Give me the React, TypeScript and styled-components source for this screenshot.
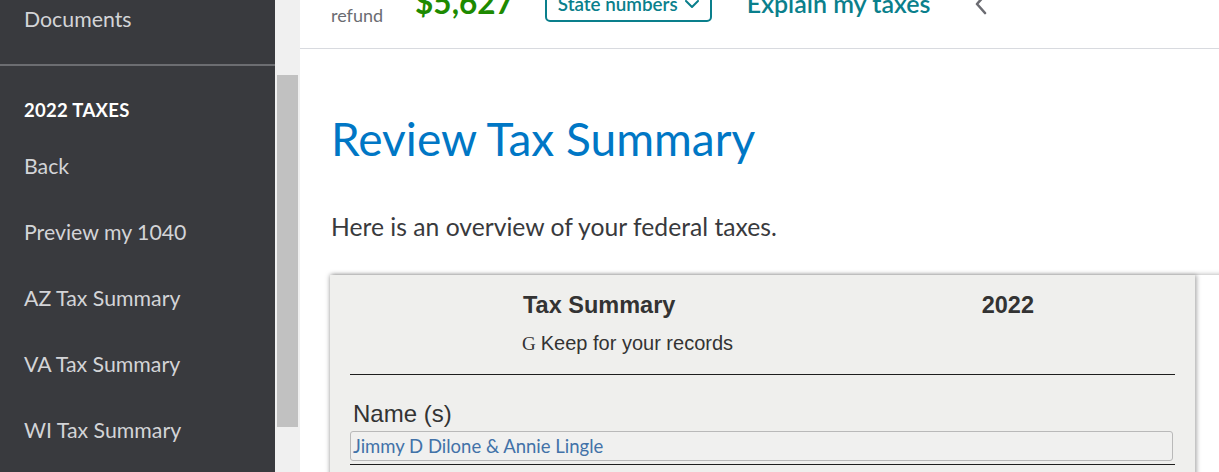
import React, { useLayoutEffect, useRef } from 'react';
import styled, { createGlobalStyle } from 'styled-components';

const Global = createGlobalStyle`
  html, body { margin: 0; padding: 0; height: 100%; overflow: hidden; background: #fff; }
  body { font-family: Lato, "Noto Sans", sans-serif; }
  #root { height: 100%; }
  * { box-sizing: border-box; }
`;

const Shell = styled.div`
  display: flex;
  width: 1219px;
  height: 472px;
  overflow: hidden;
`;

const Sidebar = styled.aside`
  flex: 0 0 300px;
  display: flex;
  height: 100%;
`;

const NavScroll = styled.nav`
  flex: 0 0 275px;
  height: 100%;
  overflow: hidden;
  background: #393a3e;
`;

const ScrollTrack = styled.div`
  flex: 0 0 25px;
  height: 100%;
  padding: 75px 2px 0;
  background: #f0f0f0;
`;

const ScrollThumb = styled.div`
  height: 352px;
  background: #c1c1c1;
`;

const NavInner = styled.div`
  padding: 20px 0 70px;
`;

const NavItem = styled.a`
  display: flex;
  align-items: center;
  height: 66px;
  padding-left: 24px;
  font-size: 21.3px;
  color: #d3d4d7;
  text-decoration: none;
  white-space: nowrap;
`;

const NavDivider = styled.hr`
  margin: 12px 0 0;
  border: 0;
  height: 2px;
  background: #6c6d71;
`;

const SectionTitle = styled.div`
  padding: 32px 0 11px 24px;
  font-size: 18.5px;
  letter-spacing: 0.3px;
  line-height: 24px;
  font-weight: 700;
  color: #fff;
`;

const Main = styled.main`
  flex: 1;
  height: 100%;
  overflow: hidden;
  background: #fff;
`;

const Header = styled.header`
  display: flex;
  align-items: center;
  height: 90px;
  padding-left: 31px;
  border-bottom: 1px solid #d8dadf;
`;

const RefundLabel = styled.div`
  font-size: 18px;
  line-height: 22px;
  color: #6b6c72;
  margin-right: 26px;
`;

const Amount = styled.div`
  font-size: 31.5px;
  font-weight: 700;
  color: #1d8a00;
  margin-right: 31px;
  margin-top: -4px;
`;

const StateButton = styled.button`
  display: flex;
  align-items: center;
  gap: 6px;
  height: 36px;
  width: 167px;
  padding: 0 0 0 11px;
  border: 2px solid #0a7f8c;
  border-radius: 5px;
  background: #fff;
  color: #0a7f8c;
  font-family: Lato, "Noto Sans", sans-serif;
  font-size: 18.8px;
  font-weight: 600;
  white-space: nowrap;
  margin-right: 35px;
`;

const ExplainLink = styled.a`
  font-size: 25px;
  font-weight: 600;
  color: #0a7f8c;
  margin-right: 44px;
  margin-top: -2px;
`;

const Body = styled.section`
  padding: 0 0 0 31px;
`;

const Title = styled.h1`
  margin: 62px 0 0;
  font-size: 46px;
  line-height: 1.2;
  font-weight: 400;
  color: #0077c5;
`;

const Lead = styled.p`
  margin: 46px 0 0;
  font-size: 24.7px;
  line-height: 1.2;
  color: #393a3d;
`;

const Frame = styled.div`
  margin: 33px 0 0 -1px;
  width: 910px;
  background: #fff;
  box-shadow: 0 0 5px rgba(0, 0, 0, 0.35);
`;

const Panel = styled.div`
  width: 865px;
  padding: 16px 20px 40px;
  background: #efefed;
  box-shadow: 2px 0 4px rgba(0, 0, 0, 0.3);
  font-family: "Liberation Sans", Arial, sans-serif;
  color: #333;
`;

const FormHead = styled.div`
  display: flex;
  justify-content: space-between;
  padding: 0 141px 0 173px;
  font-size: 23.5px;
  line-height: 28px;
  font-weight: 700;
`;

const Records = styled.div`
  margin: 13px 0 0 172px;
  font-size: 20px;
  line-height: 23px;
`;

const Glyph = styled.span`
  font-family: "Liberation Serif", serif;
  font-size: 19px;
  margin-right: 5px;
`;

const Rule = styled.div<{ $top: number }>`
  height: 1px;
  background: #1e1e1e;
  margin-top: ${(p) => p.$top}px;
`;

const FieldLabel = styled.div`
  margin: 25px 0 0 3px;
  font-size: 24px;
  line-height: 27px;
`;

const FieldBox = styled.div`
  margin-top: 4px;
  width: 823px;
  height: 30px;
  display: flex;
  align-items: center;
  padding-left: 2px;
  border: 1px solid #b9b9b9;
  border-radius: 3px;
  background: #f0f0ef;
  font-family: Lato, "Noto Sans", sans-serif;
  font-size: 18.5px;
  color: #4272a8;
`;

const ChevronDown = () => (
  <svg width="16" height="16" viewBox="0 0 16 16" fill="none">
    <polyline points="2,5 8,11 14,5" stroke="#0a7f8c" strokeWidth="2" strokeLinecap="round" strokeLinejoin="round" />
  </svg>
);

const ChevronLeft = () => (
  <svg width="14" height="24" viewBox="0 0 14 24" fill="none">
    <polyline points="11,3 3,12 11,21" stroke="#6b6c72" strokeWidth="2.6" strokeLinecap="round" strokeLinejoin="round" />
  </svg>
);

export default function App() {
  const navRef = useRef<HTMLElement>(null);
  const mainRef = useRef<HTMLElement>(null);

  useLayoutEffect(() => {
    if (navRef.current) navRef.current.scrollTop = 100;
    if (mainRef.current) mainRef.current.scrollTop = 41;
  }, []);

  return (
    <>
      <Global />
      <Shell>
        <Sidebar>
          <NavScroll ref={navRef}>
            <NavInner>
              <NavItem>Tax Home</NavItem>
              <NavItem>Documents</NavItem>
              <NavDivider />
              <SectionTitle>2022 TAXES</SectionTitle>
              <NavItem>Back</NavItem>
              <NavItem>Preview my 1040</NavItem>
              <NavItem>AZ Tax Summary</NavItem>
              <NavItem>VA Tax Summary</NavItem>
              <NavItem>WI Tax Summary</NavItem>
            </NavInner>
          </NavScroll>
          <ScrollTrack>
            <ScrollThumb />
          </ScrollTrack>
        </Sidebar>
        <Main ref={mainRef}>
          <Header>
            <RefundLabel>
              Federal
              <br />
              refund
            </RefundLabel>
            <Amount>$5,627</Amount>
            <StateButton>
              State numbers
              <ChevronDown />
            </StateButton>
            <ExplainLink>Explain my taxes</ExplainLink>
            <ChevronLeft />
          </Header>
          <Body>
            <Title>Review Tax Summary</Title>
            <Lead>Here is an overview of your federal taxes.</Lead>
            <Frame>
              <Panel>
                <FormHead>
                  <span>Tax Summary</span>
                  <span>2022</span>
                </FormHead>
                <Records>
                  <Glyph>G</Glyph>Keep for your records
                </Records>
                <Rule $top={19} />
                <FieldLabel>Name (s)</FieldLabel>
                <FieldBox>Jimmy D Dilone &amp; Annie Lingle</FieldBox>
                <Rule $top={3} />
              </Panel>
            </Frame>
          </Body>
        </Main>
      </Shell>
    </>
  );
}
